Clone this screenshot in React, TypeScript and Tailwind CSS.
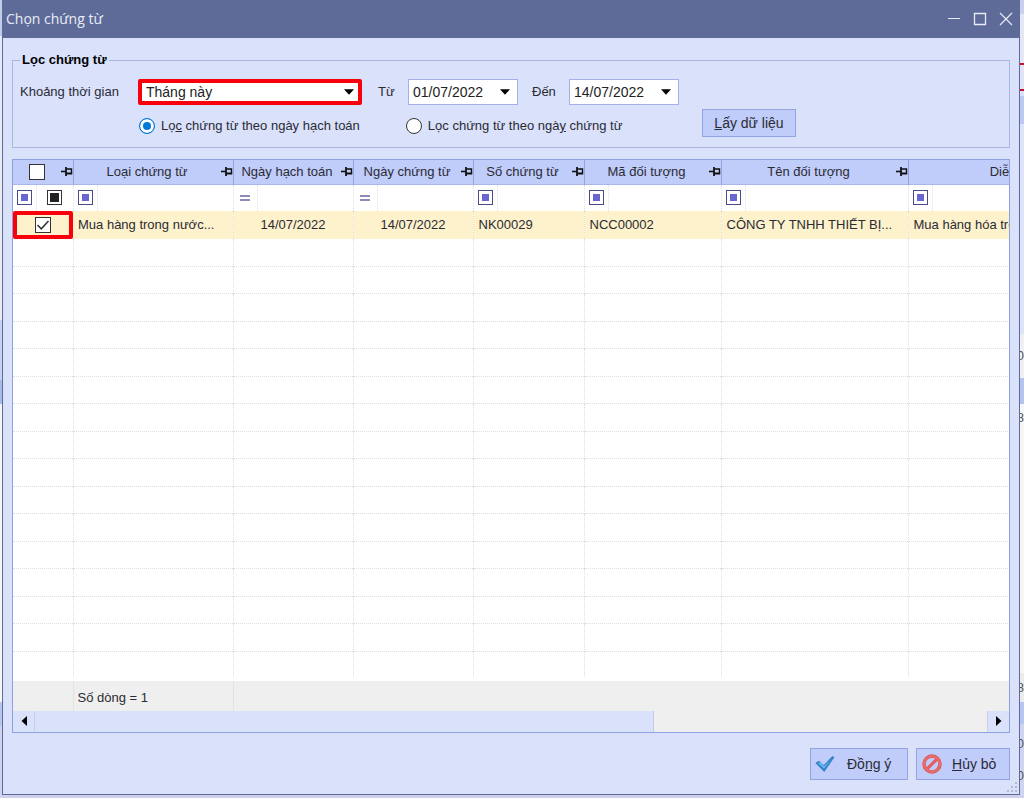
import { useState, type ReactNode } from "react";

interface Column {
  title: string;
  width: string;
  filter: "check" | "text" | "date";
  align?: "center";
}

const COLUMNS: Column[] = [
  { title: "", width: "w-[60px]", filter: "check" },
  { title: "Loại chứng từ", width: "w-40", filter: "text" },
  { title: "Ngày hạch toán", width: "w-[120px]", filter: "date", align: "center" },
  { title: "Ngày chứng từ", width: "w-[120px]", filter: "date", align: "center" },
  { title: "Số chứng từ", width: "w-[111px]", filter: "text" },
  { title: "Mã đối tượng", width: "w-[137px]", filter: "text" },
  { title: "Tên đối tượng", width: "w-[187px]", filter: "text" },
  { title: "Diễn giải", width: "w-[226px]", filter: "text" },
];

const VOUCHER = [
  "Mua hàng trong nước...",
  "14/07/2022",
  "14/07/2022",
  "NK00029",
  "NCC00002",
  "CÔNG TY TNHH THIẾT BỊ...",
  "Mua hàng hóa trong nước",
];

const EMPTY_ROWS = Array.from({ length: 16 }, (_, i) => i);

// slices of the main window that show beside the dialog
const LEFT_STRIP = [
  { h: "h-9", c: "bg-[#c3cdea]" },
  { h: "h-[84px]", c: "bg-[#e4eaf8]" },
  { h: "h-[200px]", c: "bg-[#e9edf3]" },
  { h: "h-[60px]", c: "bg-[#c5d3ee]" },
  { h: "h-6", c: "bg-[#a9bbe6]" },
  { h: "h-[298px]", c: "bg-[#f5f5f5]" },
  { h: "h-6", c: "bg-[#b7c6ee]" },
  { h: "flex-1", c: "bg-[#d0d4ee]" },
];

const RIGHT_STRIP = [
  { h: "h-3.5", c: "bg-[#c9cfee]" },
  { h: "h-[49px]", c: "bg-[#e3e7f6]" },
  { h: "h-0.5", c: "bg-[#c8102e]" },
  { h: "h-6", c: "bg-[#dfe4f8]" },
  { h: "h-0.5", c: "bg-[#c8102e]" },
  { h: "h-[5px]", c: "bg-[#d9e1fb]" },
  { h: "h-7", c: "bg-[#bcc9f0]" },
  { h: "h-[210px]", c: "bg-[#dde3f8]" },
  { h: "h-11", c: "bg-[#f0f0f4]", text: "0" },
  { h: "h-[26px]", c: "bg-[#b4c4ee]" },
  { h: "h-7", c: "bg-[#f6f6f6]", text: "8" },
  { h: "h-[241px]", c: "bg-[#f6f6f6]" },
  { h: "h-[29px]", c: "bg-[#ececec]", text: "8" },
  { h: "h-[22px]", c: "bg-[#b7c6f0]" },
  { h: "h-10", c: "bg-[#cfd5f0]", text: "0" },
  { h: "h-6", c: "bg-[#cfd5f0]", text: "0" },
  { h: "flex-1", c: "bg-[#cfd5f0]" },
];

function PinIcon() {
  return (
    <svg viewBox="0 0 12 9" className="h-[9px] w-3 shrink-0" fill="none" stroke="#111" aria-hidden="true">
      <path d="M0 4.5h5" strokeWidth="1.6" />
      <path d="M5 0v9" strokeWidth="1.8" />
      <path d="M5.5 2h5v4.500" strokeWidth="1.4" />
      <path d="M5 6.500h6.200" strokeWidth="2" />
    </svg>
  );
}

function Caret() {
  return (
    <svg viewBox="0 0 10 6" className="pointer-events-none absolute top-1/2 right-2 h-1.5 w-2.5 -translate-y-1/2" aria-hidden="true">
      <path d="M0 .3h10L5 5.8z" fill="#000" />
    </svg>
  );
}

function Tick({ className }: { className: string }) {
  return (
    <svg viewBox="0 0 16 16" className={className} fill="none" stroke="#333" strokeWidth="1.5" aria-hidden="true">
      <path d="M2.5 8l3.8 3.8L13.5 4" />
    </svg>
  );
}

function FilterSquare({ dark = false }: { dark?: boolean }) {
  return (
    <button
      type="button"
      aria-label="Điều kiện lọc"
      className={`flex size-[15px] shrink-0 items-center justify-center border bg-white ${dark ? "border-[#333]" : "border-[#4a4a86]"}`}
    >
      <span className={dark ? "size-[9px] bg-[#222]" : "size-[7px] bg-[#6a66cf]"} />
    </button>
  );
}

function DateBox({ id, label, value, labelWidth }: { id: string; label: string; value: string; labelWidth: string }) {
  return (
    <div className="flex items-center">
      <label htmlFor={id} className={labelWidth}>
        {label}
      </label>
      <div className="relative">
        <input
          id={id}
          type="text"
          defaultValue={value}
          className="block h-[26px] w-[110px] border border-[#a3b1e6] bg-white px-1 text-sm text-[#222] outline-none"
        />
        <Caret />
      </div>
    </div>
  );
}

function Radio({ value, selected, onSelect, children }: { value: string; selected: string; onSelect: (v: string) => void; children: ReactNode }) {
  return (
    <label className="flex items-center gap-1.5 whitespace-nowrap">
      <input
        type="radio"
        name="date-kind"
        value={value}
        checked={selected === value}
        onChange={() => onSelect(value)}
        className="size-4 appearance-none rounded-full border border-[#333] bg-white checked:border-[#0078d7] checked:bg-[#0078d7] checked:shadow-[inset_0_0_0_3px_#fff]"
      />
      <span>{children}</span>
    </label>
  );
}

function Strip({ slices, className }: { slices: { h: string; c: string; text?: string }[]; className: string }) {
  return (
    <div className={`flex shrink-0 flex-col overflow-hidden ${className}`} aria-hidden="true">
      {slices.map((s, i) => (
        <div key={i} className={`flex items-center justify-end overflow-hidden text-[#555] ${s.h} ${s.c}`}>
          {s.text}
        </div>
      ))}
    </div>
  );
}

export default function App() {
  const [dateKind, setDateKind] = useState("posting");
  const [checked, setChecked] = useState(true);

  return (
    <div className="flex min-h-screen bg-[#cfd0ec] font-['Liberation_Sans',Arial,sans-serif] text-[13px] leading-5 text-[#2b2b33]">
      <Strip slices={LEFT_STRIP} className="w-0.5" />

      <main className="relative mb-[3px] flex min-w-0 flex-1 flex-col border border-t-0 border-[#5e6b99] bg-[#d9e1fb]">
        <header className="flex h-[38px] shrink-0 items-center justify-between bg-[#5e6b99] pr-1.5 pl-[3px] text-[#e8ebf6]">
          <h1 className="font-['Open_Sans','Noto_Sans',sans-serif] text-sm">Chọn chứng từ</h1>
          <div className="flex items-center gap-3">
            <button type="button" aria-label="Thu nhỏ">
              <svg viewBox="0 0 14 14" className="size-3.5" stroke="currentColor" fill="none">
                <path d="M1 6.5h12" />
              </svg>
            </button>
            <button type="button" aria-label="Phóng to">
              <svg viewBox="0 0 14 14" className="size-3.5" stroke="currentColor" strokeWidth="1.3" fill="none">
                <path d="M1.5 1.5h11v11h-11z" />
              </svg>
            </button>
            <button type="button" aria-label="Đóng">
              <svg viewBox="0 0 14 14" className="size-3.5" stroke="currentColor" strokeWidth="1.2" fill="none">
                <path d="M1 1l12 12M13 1L1 13" />
              </svg>
            </button>
          </div>
        </header>

        <div className="flex flex-col px-[9px] pt-3 pb-3.5">
          <fieldset className="h-[98px] border border-[#a9b6e4] px-[7px]">
            <legend className="px-0.5 font-bold text-black">Lọc chứng từ</legend>
            <div className="flex pt-[9px]">
              <div>
                <div className="flex h-[26px] items-center">
                  <label htmlFor="period" className="w-[118px]">
                    Khoảng thời gian
                  </label>
                  <div className="relative mr-4">
                    <select
                      id="period"
                      className="block h-[26px] w-[224px] appearance-none rounded-xs border-4 border-[#f8000c] bg-white pl-1 text-sm leading-4 text-[#222] outline-none"
                    >
                      <option>Tháng này</option>
                    </select>
                    <Caret />
                  </div>
                  <div className="flex gap-3.5">
                    <DateBox id="from" label="Từ" value="01/07/2022" labelWidth="w-[30px]" />
                    <DateBox id="to" label="Đến" value="14/07/2022" labelWidth="w-[37px]" />
                  </div>
                </div>
                <div className="mt-[11px] flex gap-[46px] pl-[119px]">
                  <Radio value="posting" selected={dateKind} onSelect={setDateKind}>
                    Lọ<u>c</u> chứng từ theo ngày hạch toán
                  </Radio>
                  <Radio value="voucher" selected={dateKind} onSelect={setDateKind}>
                    Lọc chứng từ theo ngà<u>y</u> chứng từ
                  </Radio>
                </div>
              </div>
              <button type="button" className="mt-[30px] ml-[23px] h-7 w-[94px] border border-[#93a4e2] bg-[#c0ccfa] text-sm">
                <u>L</u>ấy dữ liệu
              </button>
            </div>
          </fieldset>

          <section className="mt-[11px] overflow-hidden border border-[#8fa0de] bg-white">
            <div className="overflow-hidden">
              <table className="w-[1121px] table-fixed border-collapse">
                <thead>
                  <tr className="h-6 border-b border-[#a9b6e8] bg-[#c0ccfa]">
                    {COLUMNS.map((col, i) => (
                      <th key={i} className={`border-r border-[#93a4e2] p-0 font-normal ${col.width}`}>
                        <div className="flex items-center">
                          <span className="flex flex-1 justify-center whitespace-nowrap">
                            {col.title || (
                              <input
                                type="checkbox"
                                aria-label="Chọn tất cả"
                                className="size-4 appearance-none border border-[#333] bg-white"
                              />
                            )}
                          </span>
                          <PinIcon />
                        </div>
                      </th>
                    ))}
                  </tr>
                </thead>
                <tbody>
                  <tr className="h-[26px]">
                    {COLUMNS.map((col, i) => (
                      <td key={i} className="border-r border-dotted border-[#dedede] p-0">
                        <div className="flex h-[26px] items-center">
                          <div className="flex h-full w-6 items-center border-r border-dotted border-[#e2e2e2] pl-1">
                            {col.filter === "date" ? (
                              <button type="button" aria-label="Bằng" className="ml-0.5 flex h-1.5 w-2.5 flex-col justify-between">
                                <span className="h-0.5 w-full bg-[#8d8cb8]" />
                                <span className="h-0.5 w-full bg-[#8d8cb8]" />
                              </button>
                            ) : (
                              <FilterSquare />
                            )}
                          </div>
                          {col.filter === "check" && (
                            <div className="pl-2.5">
                              <FilterSquare dark />
                            </div>
                          )}
                        </div>
                      </td>
                    ))}
                  </tr>
                  <tr className="h-7 bg-[#fdf2cc]">
                    <td className="p-0">
                      <label className="relative flex h-7 items-center justify-center rounded-xs border-4 border-[#f8000c]">
                        <input
                          type="checkbox"
                          aria-label="Chọn dòng"
                          checked={checked}
                          onChange={() => setChecked(!checked)}
                          className="size-4 appearance-none border border-[#333] bg-white"
                        />
                        {checked && <Tick className="pointer-events-none absolute size-4" />}
                      </label>
                    </td>
                    {VOUCHER.map((text, i) => (
                      <td
                        key={i}
                        className={`truncate border-r border-dotted border-[#e3dcc0] px-[5px] py-0 ${COLUMNS[i + 1].align === "center" ? "text-center" : ""}`}
                      >
                        {text}
                      </td>
                    ))}
                  </tr>
                  {EMPTY_ROWS.map((row) => (
                    <tr key={row} className="h-7 border-b border-dotted border-[#dedede] even:h-[27px]">
                      {COLUMNS.map((_, i) => (
                        <td key={i} className="border-r border-dotted border-[#dedede] p-0" />
                      ))}
                    </tr>
                  ))}
                </tbody>
                <tfoot>
                  <tr className="h-8 border-t-4 border-white bg-[#efefef]">
                    <td className="border-r border-[#e2e2e2] p-0" />
                    <td className="border-r border-[#e2e2e2] px-1 pt-1 pb-0">Số dòng = 1</td>
                    <td colSpan={6} className="p-0" />
                  </tr>
                </tfoot>
              </table>
            </div>

            <div className="flex h-[21px] bg-[#efefef]">
              <button type="button" aria-label="Cuộn trái" className="flex w-[22px] items-center justify-center border-r border-[#c9cfe6] bg-[#d9e1fb]">
                <svg viewBox="0 0 6 10" className="h-2.5 w-1.5" aria-hidden="true">
                  <path d="M6 0v10L.5 5z" fill="#000" />
                </svg>
              </button>
              <div className="flex-1">
                <div className="h-full w-[65%] border-r border-[#c3cbe6] bg-[#d9e1fb]" />
              </div>
              <button type="button" aria-label="Cuộn phải" className="flex w-[22px] items-center justify-center border-l border-[#c9cfe6] bg-[#d9e1fb]">
                <svg viewBox="0 0 6 10" className="h-2.5 w-1.5" aria-hidden="true">
                  <path d="M0 0v10l5.5-5z" fill="#000" />
                </svg>
              </button>
            </div>
          </section>

          <div className="mt-[15px] flex justify-end gap-2 text-sm">
            <button type="button" className="flex h-8 w-[98px] items-center border border-[#93a4e2] bg-[#c0ccfa] pl-1">
              <svg viewBox="0 0 20 18" className="mr-3 h-[18px] w-5" aria-hidden="true">
                <path d="M.8 8l3.400-1.800 4.600 4.300L17.200 1.600l1.800.6L9.200 16.600z" fill="#2f86d0" stroke="#2a70b4" strokeWidth=".6" />
                <path d="M2.800 7.800l3-.4 3.200 4.200L16.500 3.600 9 13.600z" fill="#6fbdf2" />
              </svg>
              <span>
                Đồ<u>ng</u> ý
              </span>
            </button>
            <button type="button" className="flex h-8 w-[94px] items-center border border-[#93a4e2] bg-[#c0ccfa] pl-[5px]">
              <svg viewBox="0 0 20 20" className="mr-2.5 size-5" fill="none" aria-hidden="true">
                <circle cx="10" cy="10" r="8" stroke="#d9504f" strokeWidth="3.400" />
                <path d="M4.600 15.400L15.400 4.600" stroke="#e25f5d" strokeWidth="3.200" />
                <circle cx="10" cy="10" r="8" stroke="#ea706d" strokeWidth="2" />
              </svg>
              <span>
                <u>H</u>ủy bỏ
              </span>
            </button>
          </div>
        </div>

        <svg viewBox="0 0 12 12" className="absolute right-px bottom-px size-3" fill="#b4b9cc" aria-hidden="true">
          <path d="M9 1h2v2H9zM5 5h2v2H5zM9 5h2v2H9zM1 9h2v2H1zM5 9h2v2H5zM9 9h2v2H9z" />
        </svg>
      </main>

      <Strip slices={RIGHT_STRIP} className="w-1" />
    </div>
  );
}
